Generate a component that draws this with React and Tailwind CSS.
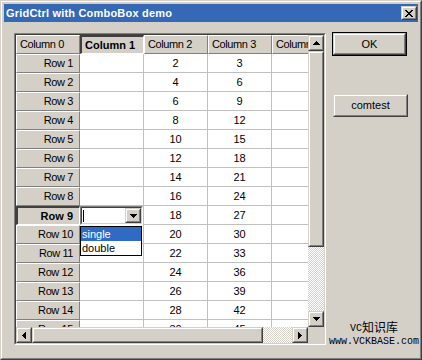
import React from "react";

function Raised({ className = "", inner = "", children }) {
  return (
    <div className={"border border-t-[#d4d0c8] border-l-[#d4d0c8] border-r-[#404040] border-b-[#404040] bg-[#d4d0c8] " + className}>
      <div className={"w-full h-full border border-t-white border-l-white border-r-[#808080] border-b-[#808080] flex items-center justify-center " + inner}>
        {children}
      </div>
    </div>
  );
}

function ArrowUp() {
  return (
    <svg width="7" height="4" shapeRendering="crispEdges">
      <rect x="3" y="0" width="1" height="1" />
      <rect x="2" y="1" width="3" height="1" />
      <rect x="1" y="2" width="5" height="1" />
      <rect x="0" y="3" width="7" height="1" />
    </svg>
  );
}
function ArrowDown() {
  return (
    <svg width="7" height="4" shapeRendering="crispEdges">
      <rect x="0" y="0" width="7" height="1" />
      <rect x="1" y="1" width="5" height="1" />
      <rect x="2" y="2" width="3" height="1" />
      <rect x="3" y="3" width="1" height="1" />
    </svg>
  );
}
function ArrowLeft() {
  return (
    <svg width="4" height="7" shapeRendering="crispEdges">
      <rect x="3" y="0" width="1" height="7" />
      <rect x="2" y="1" width="1" height="5" />
      <rect x="1" y="2" width="1" height="3" />
      <rect x="0" y="3" width="1" height="1" />
    </svg>
  );
}
function ArrowRight() {
  return (
    <svg width="4" height="7" shapeRendering="crispEdges">
      <rect x="0" y="0" width="1" height="7" />
      <rect x="1" y="1" width="1" height="5" />
      <rect x="2" y="2" width="1" height="3" />
      <rect x="3" y="3" width="1" height="1" />
    </svg>
  );
}
function CloseGlyph() {
  const rows = [
    [0, 1, 6, 7],
    [1, 2, 5, 6],
    [2, 3, 4, 5],
    [3, 4],
    [2, 3, 4, 5],
    [1, 2, 5, 6],
    [0, 1, 6, 7],
  ];
  return (
    <svg width="8" height="7" shapeRendering="crispEdges">
      {rows.map((r, y) => r.map((x) => <rect key={y + "-" + x} x={x} y={y} width="1" height="1" />))}
    </svg>
  );
}

const checker =
  "bg-[image:repeating-conic-gradient(#ffffff_0%_25%,#d4d0c8_0%_50%)] bg-[length:2px_2px]";

function FixedCell({ children, pressed = false, align = "left" }) {
  const base = pressed
    ? "border-t-2 border-l-2 border-t-[#404040] border-l-[#404040] border-r border-b border-r-white border-b-white font-bold"
    : "border border-t-white border-l-white border-r-[#808080] border-b-[#808080] tracking-[-0.4px]";
  const al = align === "left" ? "justify-start pl-[3px]" : "justify-end pr-[6px]";
  return (
    <div className={"w-[64px] h-[19px] shrink-0 bg-[#d4d0c8] flex items-center whitespace-nowrap overflow-hidden " + base + " " + al}>
      {children}
    </div>
  );
}

function DataCell({ children }) {
  return (
    <div className="w-[64px] h-[19px] shrink-0 bg-white border-r border-b border-[#c0c0c0] flex items-center justify-center">
      {children}
    </div>
  );
}

function ComboCell() {
  return (
    <div className="w-[64px] h-[19px] shrink-0 bg-white border-r border-b border-[#c0c0c0] relative">
      <div className="absolute left-0 top-0 w-[63px] h-[19px] border border-t-[#808080] border-l-[#808080] border-r-white border-b-white">
        <div className="w-full h-full border border-t-[#404040] border-l-[#404040] border-r-[#d4d0c8] border-b-[#d4d0c8] bg-white flex items-stretch">
          <div className="flex-1 flex items-center pl-[1px]">
            <div className="w-[1px] h-[12px] bg-black" />
          </div>
          <Raised className="w-[16px] h-full">
            <ArrowDown />
          </Raised>
        </div>
      </div>
      <div className="absolute left-0 top-[20px] w-[62px] h-[30px] border border-black bg-white z-10 flex flex-col text-[11px] leading-[14px]">
        <div className="h-[14px] bg-[#316ac5] text-white pl-[1px]">single</div>
        <div className="h-[14px] text-black pl-[1px]">double</div>
      </div>
    </div>
  );
}

function Grid() {
  const rows = Array.from({ length: 15 }, (_, i) => i + 1);
  return (
    <div className="w-[312px] h-[312px] shrink-0 border border-t-[#808080] border-l-[#808080] border-r-white border-b-white">
      <div className="w-full h-full border border-t-[#404040] border-l-[#404040] border-r-[#d4d0c8] border-b-[#d4d0c8] flex flex-col">
        <div className="flex h-[292px]">
          <div className="w-[292px] h-[292px] overflow-hidden bg-white flex flex-col relative">
            <div className="flex">
              <FixedCell>Column 0</FixedCell>
              <FixedCell pressed>Column 1</FixedCell>
              <FixedCell>Column 2</FixedCell>
              <FixedCell>Column 3</FixedCell>
              <FixedCell>Column 4</FixedCell>
            </div>
            {rows.map((r) => (
              <div key={r} className="flex">
                <FixedCell pressed={r === 9} align="right">Row {r}</FixedCell>
                {r === 9 ? <ComboCell /> : <DataCell />}
                <DataCell>{2 * r}</DataCell>
                <DataCell>{3 * r}</DataCell>
                <DataCell />
              </div>
            ))}
          </div>
          <div className="w-[16px] h-[292px] flex flex-col">
            <Raised className="w-[16px] h-[16px] shrink-0">
              <ArrowUp />
            </Raised>
            <Raised className="w-[16px] h-[196px] shrink-0" />
            <div className={"w-[16px] flex-1 " + checker} />
            <Raised className="w-[16px] h-[16px] shrink-0">
              <ArrowDown />
            </Raised>
          </div>
        </div>
        <div className="flex h-[16px]">
          <div className="w-[292px] h-[16px] flex">
            <Raised className="w-[16px] h-[16px] shrink-0">
              <ArrowLeft />
            </Raised>
            <Raised className="w-[231px] h-[16px] shrink-0" />
            <div className={"flex-1 h-[16px] " + checker} />
            <Raised className="w-[16px] h-[16px] shrink-0">
              <ArrowRight />
            </Raised>
          </div>
          <div className="w-[16px] h-[16px] bg-[#d4d0c8]" />
        </div>
      </div>
    </div>
  );
}

export default function App() {
  return (
    <div className="w-[422px] h-[360px] relative bg-[#d4d0c8] border border-t-[#d4d0c8] border-l-[#d4d0c8] border-r-[#404040] border-b-[#404040] font-['Liberation_Sans',Arial,sans-serif] text-[11px] text-black">
      <div className="w-full h-full border border-t-white border-l-white border-r-[#808080] border-b-[#808080] p-[2px] flex flex-col">
        <div className="h-[18px] shrink-0 bg-[#3569b5] flex items-center pl-[2px] pr-[1px]">
          <span className="flex-1 text-white font-bold text-[11px] tracking-[0.2px] whitespace-nowrap">
            GridCtrl with ComboBox demo
          </span>
          <Raised className="w-[16px] h-[14px]">
            <CloseGlyph />
          </Raised>
        </div>
        <div className="flex-1 flex items-start pl-[10px]">
          <div className="pt-[11px]">
            <Grid />
          </div>
          <div className="flex flex-col pt-[10px] pl-[6px]">
            <div className="w-[75px] h-[24px] border border-black">
              <Raised className="w-full h-full">OK</Raised>
            </div>
            <Raised className="w-[75px] h-[23px] mt-[38px] ml-[1px]">comtest</Raised>
          </div>
        </div>
      </div>
      <div className="absolute left-[325px] top-[319px] w-[96px] flex flex-col items-center text-black leading-none">
        <div className="flex items-end h-[14px]">
          <span className="font-['Liberation_Mono',monospace] text-[10px]">VC</span>
          <span className="font-['Noto_Sans_CJK_SC',sans-serif] text-[12px] leading-[14px]">知识库</span>
        </div>
        <div className="font-['Liberation_Mono',monospace] text-[10px] mt-[3px] whitespace-nowrap">www.VCKBASE.com</div>
      </div>
    </div>
  );
}
